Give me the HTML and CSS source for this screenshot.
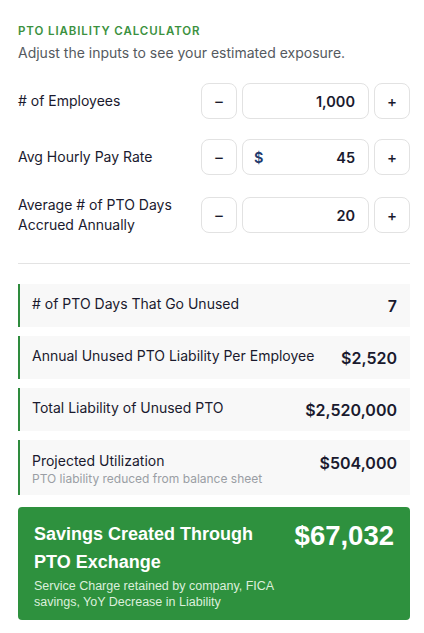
FILE: index.html
```html
<!DOCTYPE html>
<html lang="en">
<head>
    <meta charset="UTF-8">
    <meta name="viewport" content="width=device-width, initial-scale=1.0">
    <title>PTO Liability Calculator</title>
    <link rel="stylesheet" href="styles.css">
</head>
<body>

    <div class="calculator">
        <div class="eyebrow">PTO Liability Calculator</div>
        <p class="intro">Adjust the inputs to see your estimated exposure.</p>

        <div class="inputs">
            <div class="field">
                <label># of Employees</label>
                <div class="stepper">
                    <button class="step">&ndash;</button>
                    <div class="value-box"><span class="amount">1,000</span></div>
                    <button class="step">+</button>
                </div>
            </div>

            <div class="field">
                <label>Avg Hourly Pay Rate</label>
                <div class="stepper">
                    <button class="step">&ndash;</button>
                    <div class="value-box"><span class="prefix">$</span><span class="amount">45</span></div>
                    <button class="step">+</button>
                </div>
            </div>

            <div class="field">
                <label>Average # of PTO Days<br>Accrued Annually</label>
                <div class="stepper">
                    <button class="step">&ndash;</button>
                    <div class="value-box"><span class="amount">20</span></div>
                    <button class="step">+</button>
                </div>
            </div>
        </div>

        <hr class="divider">

        <div class="results">
            <div class="result-card">
                <div class="result-label">
                    <div># of PTO Days That Go Unused</div>
                </div>
                <div class="result-value">7</div>
            </div>
            <div class="result-card">
                <div class="result-label">
                    <div>Annual Unused PTO Liability Per Employee</div>
                </div>
                <div class="result-value">$2,520</div>
            </div>
            <div class="result-card">
                <div class="result-label">
                    <div>Total Liability of Unused PTO</div>
                </div>
                <div class="result-value">$2,520,000</div>
            </div>
            <div class="result-card tall">
                <div class="result-label">
                    <div>Projected Utilization</div>
                    <div class="note">PTO liability reduced from balance sheet</div>
                </div>
                <div class="result-value">$504,000</div>
            </div>
        </div>

        <div class="savings">
            <div class="savings-text">
                <h2>Savings Created Through PTO Exchange</h2>
                <p>Service Charge retained by company, FICA savings, YoY Decrease in Liability</p>
            </div>
            <div class="savings-value">$67,032</div>
        </div>
    </div>

</body>
</html>
```

FILE: styles.css
```css
body {
    font-family: Inter, "Noto Sans", sans-serif;
    background-color: #fff;
    color: #1a1a2e;
    margin: 0;
    padding: 0;
}

.calculator {
    padding: 23px 14px 20px 18px;
}

.eyebrow {
    font-size: 11.5px;
    font-weight: 600;
    letter-spacing: 0.9px;
    text-transform: uppercase;
    color: #3b9140;
    line-height: 16px;
}

.intro {
    margin: 4px 0 0;
    font-size: 14px;
    color: #555a60;
    line-height: 20px;
}

.inputs {
    margin-top: 20px;
    display: flex;
    flex-direction: column;
    gap: 20px;
}

.field {
    display: flex;
    align-items: center;
    justify-content: space-between;
}

.field label {
    font-size: 14px;
    font-weight: 400;
    color: #1a1a2e;
    line-height: 20px;
}

.stepper {
    display: flex;
    gap: 5px;
}

.step {
    width: 36px;
    height: 36px;
    padding: 0;
    border: 1px solid #e2e2e2;
    border-radius: 8px;
    background-color: #fff;
    font-family: Inter, sans-serif;
    font-size: 15px;
    font-weight: 500;
    color: #1a1a2e;
    cursor: pointer;
}

.value-box {
    width: 127px;
    height: 36px;
    box-sizing: border-box;
    border: 1px solid #e2e2e2;
    border-radius: 8px;
    display: flex;
    align-items: center;
    padding: 0 13px 0 11px;
    font-size: 14.5px;
    font-weight: 600;
    color: #1a1a2e;
}

.prefix {
    color: #233b6e;
}

.amount {
    margin-left: auto;
}

.divider {
    border: none;
    border-top: 1px solid #e3e3e3;
    margin: 28px 0 20px;
}

.results {
    display: flex;
    flex-direction: column;
    gap: 9px;
}

.result-card {
    display: flex;
    justify-content: space-between;
    align-items: flex-start;
    min-height: 43px;
    box-sizing: border-box;
    padding: 11px 13px 10px 12px;
    background-color: #f8f8f8;
    border-left: 2px solid #2e8b3d;
}

.result-card.tall {
    padding-top: 12px;
    padding-bottom: 8px;
}

.result-label {
    font-size: 14px;
    font-weight: 400;
    color: #1a1a2e;
    line-height: 18px;
}

.note {
    font-size: 12px;
    font-weight: 400;
    color: #9a9ea4;
    line-height: 17px;
}

.result-value {
    font-size: 16px;
    font-weight: 600;
    color: #1a1a2e;
    line-height: 22px;
    white-space: nowrap;
    padding-left: 10px;
}

.savings {
    margin-top: 12px;
    background-color: #2e913e;
    border-radius: 4px;
    padding: 13px 16px 10px 16px;
    display: flex;
    justify-content: space-between;
    align-items: flex-start;
    color: #fff;
    font-family: "Liberation Sans", Arial, sans-serif;
}

.savings-text {
    width: 250px;
}

.savings h2 {
    margin: 0;
    font-size: 18px;
    font-weight: 700;
    line-height: 28px;
}

.savings p {
    margin: 2px 0 0;
    font-size: 12.5px;
    line-height: 16px;
    color: #dcefdc;
}

.savings-value {
    font-size: 27.5px;
    font-weight: 700;
    line-height: 32px;
}
```
